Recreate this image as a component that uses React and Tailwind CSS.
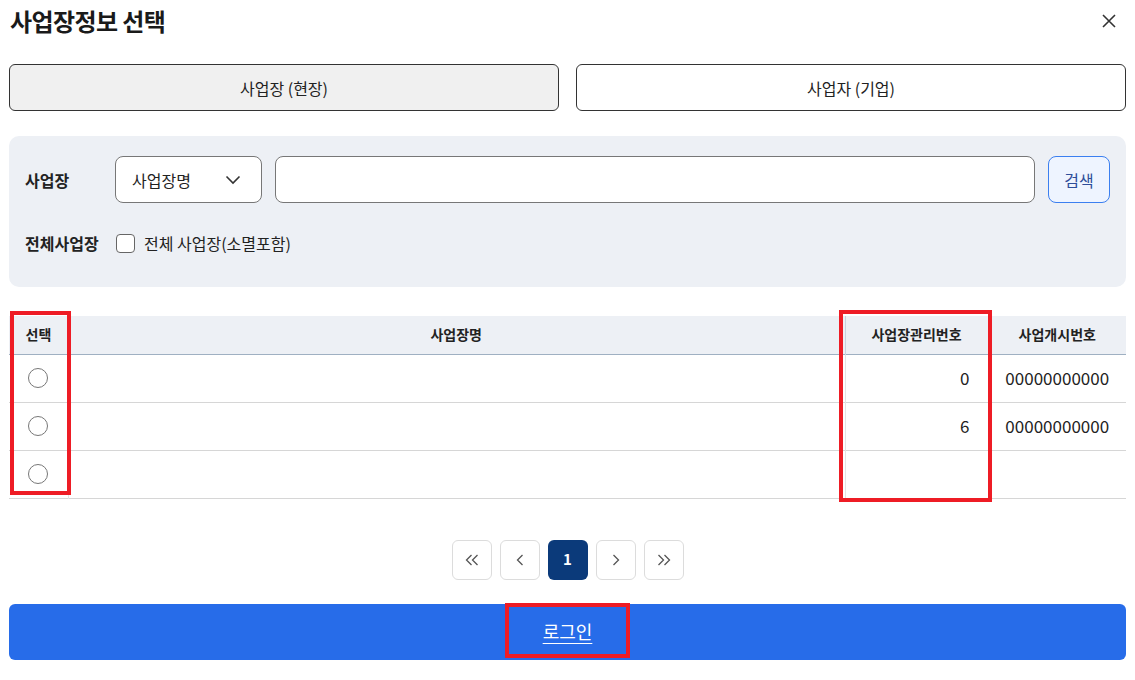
import React, { useState } from 'react'

const rows = [
  { name: '', no: '0', start: '00000000000' },
  { name: '', no: '6', start: '00000000000' },
  { name: '', no: '', start: '' },
]

const PageBtn = ({ children, active }) => (
  <button
    className={
      active
        ? 'w-10 h-10 rounded-md bg-[#0b3a7a] text-white font-bold text-[15px] flex items-center justify-center'
        : 'w-10 h-10 rounded-md border border-[#dcdcdc] bg-white text-[#555] flex items-center justify-center'
    }
  >
    {children}
  </button>
)

const App = () => {
  const [tab, setTab] = useState(0)
  const [all, setAll] = useState(false)

  return (
    <div
      className="relative w-[1135px] h-[680px] bg-white text-[#222] px-[9px]"
      style={{ fontFamily: '"Noto Sans CJK KR", "Noto Sans", sans-serif' }}
    >
      {/* header */}
      <div className="flex items-center justify-between h-[42px] pl-px pr-[9px]">
        <h1 className="text-[24px] font-bold tracking-tight text-[#1a1a1a]">사업장정보 선택</h1>
        <svg width="16" height="16" viewBox="0 0 16 16" className="text-[#333]">
          <path d="M2 2 L14 14 M14 2 L2 14" stroke="currentColor" strokeWidth="1.6" />
        </svg>
      </div>

      {/* tabs */}
      <div className="flex gap-[17px] mt-[22px]">
        <button
          onClick={() => setTab(0)}
          className={`flex-1 h-[47px] rounded-md border border-[#333] text-[16px] ${tab === 0 ? 'bg-[#f0f0f0]' : 'bg-white'}`}
        >
          사업장 (현장)
        </button>
        <button
          onClick={() => setTab(1)}
          className={`flex-1 h-[47px] rounded-md border border-[#333] text-[16px] ${tab === 1 ? 'bg-[#f0f0f0]' : 'bg-white'}`}
        >
          사업자 (기업)
        </button>
      </div>

      {/* search panel */}
      <div className="mt-[25px] h-[151px] rounded-[10px] bg-[#edf0f5] pl-4 pr-4 pt-5">
        <div className="flex items-center h-[47px]">
          <span className="w-[90px] text-[16px] font-bold">사업장</span>
          <div className="w-[147px] h-[47px] rounded-lg border border-[#777] bg-white flex items-center justify-between pl-4 pr-5 text-[16px]">
            <span>사업장명</span>
            <svg width="16" height="10" viewBox="0 0 16 10">
              <path d="M1.5 1.5 L8 8 L14.5 1.5" fill="none" stroke="#333" strokeWidth="1.6" />
            </svg>
          </div>
          <input className="ml-[13px] flex-1 h-[47px] rounded-lg border border-[#777] bg-white px-3 outline-none" />
          <button className="ml-[13px] w-[62px] h-[47px] rounded-lg border border-[#3b7ff0] bg-[#eef4ff] text-[16px] text-[#2d4d9a]">
            검색
          </button>
        </div>
        <div className="flex items-center mt-[27px] h-[26px]">
          <span className="w-[91px] text-[16px] font-bold">전체사업장</span>
          <label className="flex items-center gap-[9px] text-[16px]">
            <input
              type="checkbox"
              checked={all}
              onChange={() => setAll(!all)}
              className="appearance-none w-[19px] h-[19px] rounded-[4px] border border-[#666] bg-white"
            />
            전체 사업장(소멸포함)
          </label>
        </div>
      </div>

      {/* table */}
      <table className="mt-[29px] w-full border-collapse text-[16px]">
        <thead>
          <tr className="h-[38px] bg-[#edf0f5] border-b border-[#9fb0c2] text-[14px] font-bold">
            <th className="w-[59px] font-bold">선택</th>
            <th className="font-bold">사업장명</th>
            <th className="w-[143px] font-bold border-l border-[#c9d3de]">사업장관리번호</th>
            <th className="w-[138px] font-bold border-l border-[#c9d3de]">사업개시번호</th>
          </tr>
        </thead>
        <tbody>
          {rows.map((r, i) => (
            <tr key={i} className="h-[48px] border-b border-[#d6d6d6]">
              <td className="p-0">
                <div className="flex items-center justify-center h-[46px]">
                  <span className="block w-5 h-5 rounded-full border border-[#777]" />
                </div>
              </td>
              <td className="border-l border-[#e4e4e4] px-3">{r.name}</td>
              <td className="border-l border-[#e4e4e4] text-right pr-[18px] text-[17px]">{r.no}</td>
              <td className="border-l border-[#e4e4e4] text-center text-[17px]">{r.start}</td>
            </tr>
          ))}
        </tbody>
      </table>

      {/* pagination */}
      <div className="flex justify-center gap-2 mt-[41px]">
        <PageBtn>
          <svg width="14" height="12" viewBox="0 0 14 12">
            <path d="M6.5 1 L1.5 6 L6.5 11 M12.5 1 L7.5 6 L12.5 11" fill="none" stroke="currentColor" strokeWidth="1.3" />
          </svg>
        </PageBtn>
        <PageBtn>
          <svg width="8" height="12" viewBox="0 0 8 12">
            <path d="M6.5 1 L1.5 6 L6.5 11" fill="none" stroke="currentColor" strokeWidth="1.3" />
          </svg>
        </PageBtn>
        <PageBtn active>1</PageBtn>
        <PageBtn>
          <svg width="8" height="12" viewBox="0 0 8 12">
            <path d="M1.5 1 L6.5 6 L1.5 11" fill="none" stroke="currentColor" strokeWidth="1.3" />
          </svg>
        </PageBtn>
        <PageBtn>
          <svg width="14" height="12" viewBox="0 0 14 12">
            <path d="M1.5 1 L6.5 6 L1.5 11 M7.5 1 L12.5 6 L7.5 11" fill="none" stroke="currentColor" strokeWidth="1.3" />
          </svg>
        </PageBtn>
      </div>

      {/* login */}
      <button className="mt-[24px] w-full h-[56px] rounded-md bg-[#276ce9] text-white text-[18px] underline underline-offset-4">
        로그인
      </button>

      {/* annotation boxes */}
      <div className="absolute left-[10px] top-[311px] w-[61px] h-[184px] border-4 border-[#ee1c25] pointer-events-none" />
      <div className="absolute left-[839px] top-[310px] w-[153px] h-[192px] border-4 border-[#ee1c25] pointer-events-none" />
      <div className="absolute left-[505px] top-[603px] w-[125px] h-[55px] border-4 border-[#ee1c25] pointer-events-none" />
    </div>
  )
}

export default App
